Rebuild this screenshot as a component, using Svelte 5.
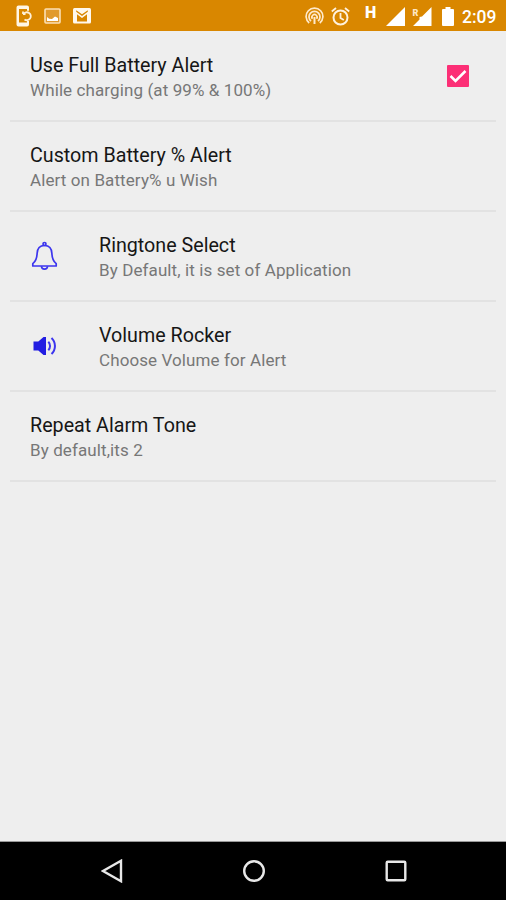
<script>
  const items = [
    { title: "Use Full Battery Alert", summary: "While charging (at 99% & 100%)", checkbox: true },
    { title: "Custom Battery % Alert", summary: "Alert on Battery% u Wish" },
    { title: "Ringtone Select", summary: "By Default, it is set of Application", icon: "bell" },
    { title: "Volume Rocker", summary: "Choose Volume for Alert", icon: "volume" },
    { title: "Repeat Alarm Tone", summary: "By default,its 2" }
  ];

  let checked = $state(true);
</script>

<div class="screen">
  <header>
    <div class="notifications">
      <svg width="18" height="22" viewBox="0 0 18 22">
        <path d="M2.500 .5h8.500a2 2 0 0 1 2 2v3.200h-2V4H3v13.500h8V16h2v3.500a2 2 0 0 1-2 2H2.500a2 2 0 0 1-2-2v-17a2 2 0 0 1 2-2z" fill="#fff6e6" />
        <path d="M7 8V5.500M7 8h2.500M7.500 8a4 4 0 1 1 1 5.500" transform="translate(0 1)" fill="none" stroke="#fff0d8" stroke-width="1.800" />
      </svg>
      <svg class="photo" width="17" height="16" viewBox="0 0 17 16">
        <rect x="1" y="1" width="15" height="14" rx="1" fill="#e19a2c" stroke="#fbe0b5" stroke-width="1.600" />
        <path d="M3 13V9l2.200 1.700L8 11l3-2.500L14 10v3z" fill="#fff" />
      </svg>
      <svg class="mail" width="18" height="16" viewBox="0 0 18 16">
        <rect width="18" height="15.500" rx="1.500" fill="#fff8ed" />
        <path d="M3.200 2.200L9 6.200l5.800-4v1.500L9 7.900 3.200 3.700z" fill="#d98700" />
        <path d="M4 6.200l5 3.700 5-3.700v7.300H4z" fill="#d98700" />
      </svg>
    </div>
    <div class="status">
      <svg width="19" height="18" viewBox="0 0 19 18" fill="none" stroke="#ffe9ca" stroke-width="1.700">
        <path d="M4.200 16A8.400 8.400 0 1 1 14.800 16M6 14.200a5.500 5.500 0 1 1 7 0" />
        <path d="M7.500 11.800a2.600 2.600 0 1 1 4 0" />
        <path d="M9.500 10v7" stroke-width="2" />
      </svg>
      <svg class="alarm" width="19" height="19" viewBox="0 0 19 19" fill="none" stroke="#fff1dc" stroke-width="2">
        <circle cx="9.500" cy="10.500" r="7" />
        <path d="M.8 4.500L5 1M18.200 4.500L14 1M9.500 6v5l3.300 2" stroke-width="1.800" />
      </svg>
      <span class="network">H</span>
      <svg class="signal" width="19" height="19" viewBox="0 0 19 19">
        <path d="M19 0v19H0z" fill="#fff" />
      </svg>
      <svg class="roaming" width="20" height="19" viewBox="0 0 20 19">
        <path d="M19.500 0v19H1l6.500-6.500V10L10 9.500z" fill="#fff" />
        <text x="0.500" y="8.500" font-size="9" font-weight="900" fill="#ffe7c5">R</text>
      </svg>
      <svg class="battery" width="12" height="19" viewBox="0 0 12 19">
        <path d="M3.500 0h5v2H11a1 1 0 0 1 1 1v15a1 1 0 0 1-1 1H1a1 1 0 0 1-1-1V3a1 1 0 0 1 1-1h2.500z" fill="#fff" />
      </svg>
      <span class="clock">2:09</span>
    </div>
  </header>

  <main>
    {#each items as item}
      <div class="item">
        {#if item.icon}
          <div class="icon">
            {#if item.icon === "bell"}
              <svg width="28" height="30" viewBox="0 0 28 30" fill="none" stroke="#3c35ee" stroke-width="1.700" stroke-linejoin="round">
                <circle cx="14.500" cy="3" r="1.500" />
                <path d="M14.500 4.500c-4.800 0-7.200 3.500-7.400 8-.2 5.500-1.500 8-4.300 10.200V25h23.400v-2.300c-2.800-2.200-4.100-4.700-4.300-10.200-.2-4.500-2.600-8-7.400-8z" />
                <path d="M11.500 25.300a3 2.800 0 0 0 6 0" />
              </svg>
            {:else}
              <svg width="28" height="24" viewBox="0 0 28 24">
                <path d="M3.500 7.500h4.800L13.500 3H16v18h-2.500L8.300 16.500H3.500z" fill="#221de2" />
                <path d="M18.300 7.800a6 6 0 0 1 0 8.400M21.500 4a11 11 0 0 1 0 16" fill="none" stroke="#3c35ee" stroke-width="2" />
              </svg>
            {/if}
          </div>
        {/if}
        <div class="text">
          <p class="title">{item.title}</p>
          <p class="summary">{item.summary}</p>
        </div>
        {#if item.checkbox}
          <button class:checked={checked} onclick={() => checked = !checked} aria-label={item.title}>
            {#if checked}
              <svg width="22" height="22" viewBox="0 0 22 22">
                <path d="M3.500 11l5 5L18.500 6" fill="none" stroke="#fff" stroke-width="2.500" />
              </svg>
            {/if}
          </button>
        {/if}
      </div>
    {/each}
  </main>

  <nav>
    <svg width="22" height="24" viewBox="0 0 22 24">
      <path d="M20 1.800v20.400L2 12z" />
    </svg>
    <svg width="24" height="24" viewBox="0 0 24 24">
      <circle cx="12" cy="12" r="9.800" />
    </svg>
    <svg width="22" height="24" viewBox="0 0 22 24">
      <rect x="1.700" y="2.700" width="18.600" height="18.600" rx="1" />
    </svg>
  </nav>
</div>

<style>
:global(body) {
  margin: 0;
  font-family: Roboto, sans-serif;
}

.screen {
  width: 506px;
  height: 900px;
  display: flex;
  flex-direction: column;
  background: #eee;
  overflow: hidden;
}

svg {
  display: block;
  flex: none;
}

header {
  height: 31px;
  box-sizing: border-box;
  padding: 1px 9px 0 16px;
  display: flex;
  justify-content: space-between;
  background: #d98700;
  color: #fff;
}

.notifications, .status {
  display: flex;
  align-items: center;
}

.photo {
  margin-left: 10px;
}

.mail {
  margin-left: 12px;
}

.alarm {
  margin-left: 7px;
}

.network {
  width: 12px;
  margin: 0 0 7px 15px;
  font-size: 16px;
  font-weight: 900;
  line-height: 16px;
}

.signal {
  margin-left: 9px;
}

.roaming {
  margin-left: 7px;
}

.battery {
  margin-left: 10px;
}

.clock {
  width: 35px;
  margin-left: 8px;
  padding-top: 1px;
  font-size: 17.500px;
  font-weight: 500;
  line-height: 30px;
}

main {
  flex: 1;
  padding: 1px 10px 0;
  border-bottom: 1px solid #999;
}

.item {
  height: 90.1px;
  box-sizing: border-box;
  padding: 0 27px 1px 20px;
  display: flex;
  align-items: center;
  border-bottom: 2px solid #e2e2e2;
}

.icon {
  width: 69px;
}

.text {
  flex: 1;
  padding-top: 4px;
}

p {
  margin: 0;
  white-space: nowrap;
}

.title {
  color: #161616;
  font-size: 19.700px;
  line-height: 25px;
}

.summary {
  color: #777;
  font-size: 17px;
  line-height: 24px;
  letter-spacing: .1px;
}

button {
  width: 22px;
  height: 22px;
  padding: 0;
  border: 2px solid #757575;
  border-radius: 2px;
  background: none;
}

button.checked {
  border: 0;
  border-radius: 1px;
  background: #fc2f76;
}

nav {
  height: 58px;
  padding: 0 99px 0 101px;
  display: flex;
  align-items: center;
  justify-content: space-between;
  background: #000;
}

nav svg {
  fill: none;
  stroke: #e8e8e8;
  stroke-width: 2.400;
}
</style>
